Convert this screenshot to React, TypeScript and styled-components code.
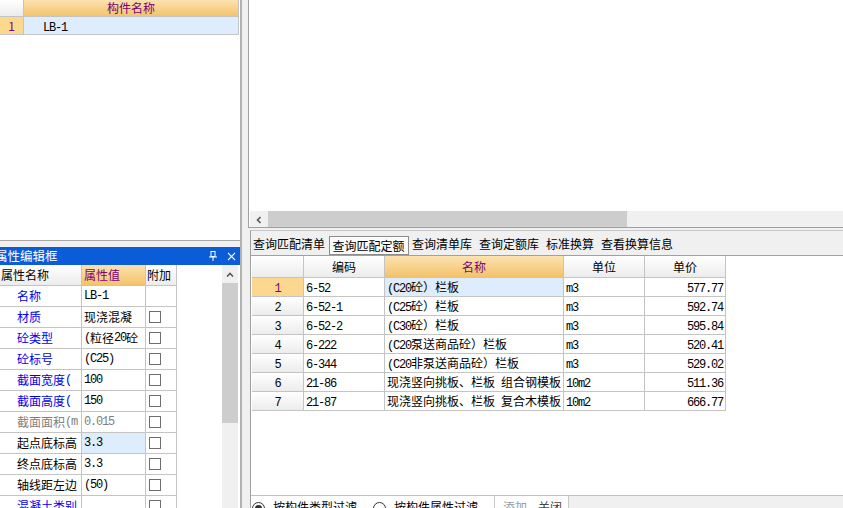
import styled, { createGlobalStyle } from 'styled-components'

const GlobalStyle = createGlobalStyle`
  html, body {
    margin: 0;
    padding: 0;
    background: #f0f0f0;
  }
  body {
    font-family: "Noto Sans CJK SC", "Liberation Sans", sans-serif;
    font-size: 12px;
  }
  * {
    box-sizing: border-box;
  }
`

const LINE = '#c4c4c4'
const FRAME = '#a0a0a0'
const HEAD_BG = 'linear-gradient(#ffffff, #ececec)'
const ORANGE_BG = 'linear-gradient(#fce2b0, #f3c36a)'
const PURPLE = '#7a0078'

// латиница и цифры в гриде узкие (как в SimSun), поэтому отдельный шрифт
const Ascii = styled.span`
  font-family: "Liberation Mono", monospace;
  font-size: 12px;
  letter-spacing: -1.2px;
`

function Txt({ s }: { s: string }) {
  return (
    <>
      {s.split(/([\x20-\x7e]+)/).map((part, i) =>
        i % 2 === 1 ? <Ascii key={i}>{part}</Ascii> : part
      )}
    </>
  )
}

const Screen = styled.div`
  display: flex;
  width: 843px;
  height: 508px;
  overflow: hidden;
  background: #f0f0f0;
  color: #000;
  line-height: 1;
`

/* ---------- левая часть ---------- */

const LeftPane = styled.div`
  flex: none;
  width: 242px;
  display: flex;
  flex-direction: column;
  border-right: 2px solid #b2b2b2;
`

const ComponentList = styled.div`
  height: 241px;
  flex: none;
  background: #fff;
  border-bottom: 1px solid #a9a9a9;
  margin-bottom: 6px;
`

const ListGrid = styled.div`
  width: 239px;
  border-right: 1px solid ${LINE};
`

const ListRow = styled.div<{ $h: number }>`
  display: flex;
  height: ${p => p.$h}px;
  border-bottom: 1px solid ${LINE};
`

const ListNum = styled.div<{ $active?: boolean }>`
  width: 24px;
  flex: none;
  border-right: 1px solid ${LINE};
  background: ${p => (p.$active ? '#fcd88f' : HEAD_BG)};
  color: ${PURPLE};
  text-align: center;
  line-height: 17px;
`

const ListCell = styled.div<{ $head?: boolean }>`
  flex: 1;
  background: ${p => (p.$head ? ORANGE_BG : '#ddedfd')};
  color: ${p => (p.$head ? PURPLE : '#000')};
  text-align: ${p => (p.$head ? 'center' : 'left')};
  padding-left: ${p => (p.$head ? 0 : 19)}px;
  line-height: ${p => (p.$head ? 16 : 17)}px;
`

const PropTitle = styled.div`
  height: 18px;
  flex: none;
  display: flex;
  align-items: center;
  background: #0b5cd7;
  color: #fff;
  font-size: 12.5px;
  overflow: hidden;
`

const TitleText = styled.span`
  margin-left: -5px;
  white-space: nowrap;
`

const TitleIcons = styled.div`
  margin-left: auto;
  display: flex;
  align-items: center;
  gap: 10px;
  padding-right: 4px;
`

const PropBody = styled.div`
  flex: 1;
  display: flex;
  background: #fff;
  overflow: hidden;
`

const PropGrid = styled.div`
  width: 177px;
  flex: none;
`

const PropRow = styled.div`
  display: flex;
  height: 21px;
  border-bottom: 1px solid ${LINE};
`

type Tone = 'blue' | 'gray' | 'black'
const toneColor: Record<Tone, string> = { blue: '#0000f0', gray: '#808080', black: '#000' }

const PropCell = styled.div<{ $w: number; $pad?: number; $tone?: Tone; $bg?: string }>`
  width: ${p => p.$w}px;
  flex: none;
  display: flex;
  align-items: center;
  border-right: 1px solid ${LINE};
  padding-left: ${p => p.$pad ?? 2}px;
  background: ${p => p.$bg ?? '#fff'};
  color: ${p => toneColor[p.$tone ?? 'black']};
  white-space: nowrap;
  overflow: hidden;
`

const CheckBox = styled.span`
  width: 12px;
  height: 12px;
  margin-left: 1px;
  border: 1px solid #6e6e6e;
  background: #fff;
`

const VScroll = styled.div`
  width: 16px;
  flex: none;
  margin-left: auto;
  margin-right: 2px;
  display: flex;
  flex-direction: column;
  background: #f0f0f0;
`

const ScrollBtn = styled.div`
  width: 16px;
  height: 18px;
  flex: none;
  display: flex;
  align-items: center;
  justify-content: center;
`

const VThumb = styled.div`
  height: 140px;
  background: #cdcdcd;
`

/* ---------- правая часть ---------- */

const RightPane = styled.div`
  flex: 1;
  min-width: 0;
  margin-left: 6px;
  display: flex;
  flex-direction: column;
`

const TopArea = styled.div`
  height: 228px;
  flex: none;
  display: flex;
  flex-direction: column;
  background: #fff;
  border-left: 1px solid ${FRAME};
  border-bottom: 1px solid ${FRAME};
`

const Canvas = styled.div`
  flex: 1;
`

const HScroll = styled.div`
  height: 16px;
  flex: none;
  margin-left: 1px;
  display: flex;
  background: #f0f0f0;
`

const HThumb = styled.div`
  width: 359px;
  margin-left: 2px;
  background: #cdcdcd;
`

const LowerArea = styled.div`
  flex: 1;
  margin-top: 2px;
  margin-left: 2px;
  display: flex;
  flex-direction: column;
  border-left: 1px solid ${FRAME};
  border-top: 1px solid #c8c8c8;
`

const TabStrip = styled.div`
  height: 24px;
  flex: none;
  display: flex;
  align-items: flex-end;
  margin-left: -1.5px;
`

const Tab = styled.div<{ $active?: boolean }>`
  height: 19px;
  line-height: 17px;
  padding: ${p => (p.$active ? '0 3px' : '1px 3.5px')};
  margin-bottom: ${p => (p.$active ? 0 : 2)}px;
  border: ${p => (p.$active ? '1px solid #8c8c8c' : 'none')};
  background: ${p => (p.$active ? '#fafafa' : 'transparent')};
  white-space: nowrap;
`

const GridArea = styled.div`
  height: 240px;
  flex: none;
  padding-left: 1px;
  background: #fff;
  border-top: 1px solid ${FRAME};
`

const GridRow = styled.div<{ $h: number }>`
  display: flex;
  height: ${p => p.$h}px;
`

const NumCell = styled.div<{ $active?: boolean }>`
  width: 52px;
  flex: none;
  border-right: 1px solid ${LINE};
  border-bottom: 1px solid ${LINE};
  background: ${p => (p.$active ? '#fcd790' : HEAD_BG)};
  color: ${p => (p.$active ? PURPLE : '#000')};
  text-align: center;
  line-height: 18px;
`

const HeadCell = styled.div<{ $w: number; $active?: boolean }>`
  width: ${p => p.$w}px;
  flex: none;
  border-right: 1px solid ${LINE};
  border-bottom: 1px solid ${LINE};
  background: ${p => (p.$active ? ORANGE_BG : HEAD_BG)};
  color: ${p => (p.$active ? PURPLE : '#000')};
  text-align: center;
  line-height: 21px;
`

const Cell = styled.div<{ $w: number; $right?: boolean; $active?: boolean }>`
  width: ${p => p.$w}px;
  flex: none;
  border-right: 1px solid ${LINE};
  border-bottom: 1px solid ${LINE};
  background: ${p => (p.$active ? '#ddedfd' : '#fff')};
  text-align: ${p => (p.$right ? 'right' : 'left')};
  padding: 0 2px;
  line-height: 18px;
  white-space: nowrap;
  overflow: hidden;
`

const BottomBar = styled.div`
  flex: 1;
  display: flex;
  border-top: 1px solid #c0c0c0;
  background: #f0f0f0;
`

const FilterGroup = styled.div`
  display: flex;
  align-items: flex-start;
  padding: 6px 0 0 1px;
  background: #fff;
  border-right: 1px solid #c8c8c8;
`

const Radio = styled.span<{ $on?: boolean }>`
  width: 13px;
  height: 13px;
  flex: none;
  border-radius: 50%;
  border: 1px solid #333;
  background: #fff;
  display: flex;
  align-items: center;
  justify-content: center;
  &::after {
    content: '';
    width: 7px;
    height: 7px;
    border-radius: 50%;
    background: ${p => (p.$on ? '#333' : 'transparent')};
  }
`

const RadioLabel = styled.span`
  margin: -1px 16px 0 8px;
  white-space: nowrap;
`

const ActionGroup = styled.div`
  display: flex;
  gap: 11px;
  padding: 5px 6px 0 8px;
  background: #fff;
  border-right: 1px solid #c8c8c8;
`

const Action = styled.span<{ $muted?: boolean }>`
  color: ${p => (p.$muted ? '#9a9a9a' : '#444')};
`

/* ---------- данные ---------- */

const propRows: { name: string; value: string; tone: Tone; check: boolean; current?: boolean; muted?: boolean }[] = [
  { name: '名称', value: 'LB-1', tone: 'blue', check: false },
  { name: '材质', value: '现浇混凝', tone: 'blue', check: true },
  { name: '砼类型', value: '(粒径20砼', tone: 'blue', check: true },
  { name: '砼标号', value: '(C25)', tone: 'blue', check: true },
  { name: '截面宽度(', value: '100', tone: 'blue', check: true },
  { name: '截面高度(', value: '150', tone: 'blue', check: true },
  { name: '截面面积(m', value: '0.015', tone: 'gray', check: true, muted: true },
  { name: '起点底标高', value: '3.3', tone: 'black', check: true, current: true },
  { name: '终点底标高', value: '3.3', tone: 'black', check: true },
  { name: '轴线距左边', value: '(50)', tone: 'black', check: true },
  { name: '混凝土类别', value: '', tone: 'blue', check: true },
]

const quotas = [
  { code: '6-52', name: '(C20砼）栏板', unit: 'm3', price: '577.77' },
  { code: '6-52-1', name: '(C25砼）栏板', unit: 'm3', price: '592.74' },
  { code: '6-52-2', name: '(C30砼）栏板', unit: 'm3', price: '595.84' },
  { code: '6-222', name: '(C20泵送商品砼）栏板', unit: 'm3', price: '520.41' },
  { code: '6-344', name: '(C20非泵送商品砼）栏板', unit: 'm3', price: '529.02' },
  { code: '21-86', name: '现浇竖向挑板、栏板 组合钢模板', unit: '10m2', price: '511.36' },
  { code: '21-87', name: '现浇竖向挑板、栏板 复合木模板', unit: '10m2', price: '666.77' },
]

const tabs = ['查询匹配清单', '查询匹配定额', '查询清单库', '查询定额库', '标准换算', '查看换算信息']
const activeTab = 1

function PinIcon() {
  return (
    <svg width="8" height="10" viewBox="0 0 8 10">
      <rect x="2" y="0.5" width="4" height="5" fill="none" stroke="#fff" />
      <line x1="0" y1="6" x2="8" y2="6" stroke="#fff" />
      <line x1="4" y1="6" x2="4" y2="10" stroke="#fff" />
    </svg>
  )
}

function CloseIcon() {
  return (
    <svg width="9" height="9" viewBox="0 0 9 9">
      <path d="M1 1L8 8M8 1L1 8" stroke="#fff" strokeWidth="1.1" />
    </svg>
  )
}

function Chevron({ dir }: { dir: 'up' | 'left' }) {
  return dir === 'up' ? (
    <svg width="8" height="5" viewBox="0 0 8 5">
      <path d="M1 4.5L4 1.5L7 4.5" fill="none" stroke="#5a5a5a" strokeWidth="1.6" />
    </svg>
  ) : (
    <svg width="5" height="8" viewBox="0 0 5 8">
      <path d="M4.5 1L1.5 4L4.5 7" fill="none" stroke="#5a5a5a" strokeWidth="1.6" />
    </svg>
  )
}

export default function App() {
  return (
    <>
      <GlobalStyle />
      <Screen>
        <LeftPane>
          <ComponentList>
            <ListGrid>
              <ListRow $h={17}>
                <ListNum />
                <ListCell $head>构件名称</ListCell>
              </ListRow>
              <ListRow $h={18}>
                <ListNum $active>1</ListNum>
                <ListCell><Txt s="LB-1" /></ListCell>
              </ListRow>
            </ListGrid>
          </ComponentList>

          <PropTitle>
            <TitleText>属性编辑框</TitleText>
            <TitleIcons>
              <PinIcon />
              <CloseIcon />
            </TitleIcons>
          </PropTitle>

          <PropBody>
            <PropGrid>
              <PropRow>
                <PropCell $w={82} $pad={1} $bg={HEAD_BG}>属性名称</PropCell>
                <PropCell $w={64} $bg={ORANGE_BG} style={{ color: PURPLE }}>属性值</PropCell>
                <PropCell $w={31} $pad={1} $bg={HEAD_BG}>附加</PropCell>
              </PropRow>
              {propRows.map(r => (
                <PropRow key={r.name}>
                  <PropCell $w={82} $pad={17} $tone={r.tone}><Txt s={r.name} /></PropCell>
                  <PropCell $w={64} $tone={r.muted ? 'gray' : 'black'} $bg={r.current ? '#ddedfd' : undefined}>
                    <Txt s={r.value} />
                  </PropCell>
                  <PropCell $w={31}>{r.check && <CheckBox />}</PropCell>
                </PropRow>
              ))}
            </PropGrid>
            <VScroll>
              <ScrollBtn><Chevron dir="up" /></ScrollBtn>
              <VThumb />
            </VScroll>
          </PropBody>
        </LeftPane>

        <RightPane>
          <TopArea>
            <Canvas />
            <HScroll>
              <ScrollBtn><Chevron dir="left" /></ScrollBtn>
              <HThumb />
            </HScroll>
          </TopArea>

          <LowerArea>
            <TabStrip>
              {tabs.map((t, i) => (
                <Tab key={t} $active={i === activeTab}>{t}</Tab>
              ))}
            </TabStrip>

            <GridArea>
              <GridRow $h={22}>
                <HeadCell $w={52} />
                <HeadCell $w={81}>编码</HeadCell>
                <HeadCell $w={179} $active>名称</HeadCell>
                <HeadCell $w={81}>单位</HeadCell>
                <HeadCell $w={81}>单价</HeadCell>
              </GridRow>
              {quotas.map((q, i) => (
                <GridRow $h={19} key={q.code}>
                  <NumCell $active={i === 0}><Txt s={String(i + 1)} /></NumCell>
                  <Cell $w={81}><Txt s={q.code} /></Cell>
                  <Cell $w={179} $active={i === 0}><Txt s={q.name} /></Cell>
                  <Cell $w={81}><Txt s={q.unit} /></Cell>
                  <Cell $w={81} $right><Txt s={q.price} /></Cell>
                </GridRow>
              ))}
            </GridArea>

            <BottomBar>
              <FilterGroup>
                <Radio $on />
                <RadioLabel>按构件类型过滤</RadioLabel>
                <Radio />
                <RadioLabel>按构件属性过滤</RadioLabel>
              </FilterGroup>
              <ActionGroup>
                <Action $muted>添加</Action>
                <Action>关闭</Action>
              </ActionGroup>
            </BottomBar>
          </LowerArea>
        </RightPane>
      </Screen>
    </>
  )
}
